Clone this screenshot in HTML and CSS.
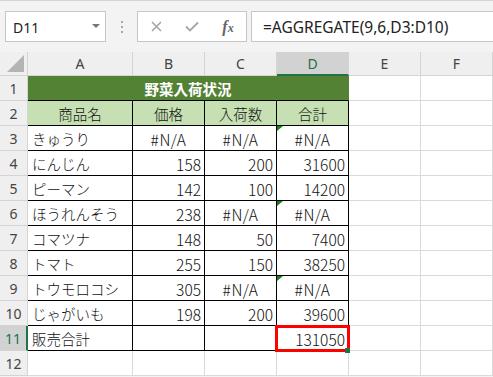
FILE: index.html
```html
<!DOCTYPE html>
<html lang="ja">
<head>
    <meta charset="UTF-8">
    <meta name="viewport" content="width=device-width, initial-scale=1.0">
    <title>AGGREGATE</title>
    <link rel="stylesheet" href="styles.css">
</head>
<body>
    <div class="toolbar">
        <div class="namebox">
            <span>D11</span>
            <span class="arrow"></span>
        </div>
        <div class="grip"><i></i><i></i><i></i></div>
        <div class="fxbox">
            <span class="slot">
                <svg width="11" height="11" viewBox="0 0 11 11"><path d="M1 1L10 10M10 1L1 10" stroke="#a6a6a6" stroke-width="1.6" fill="none"/></svg>
            </span>
            <span class="slot">
                <svg width="14" height="11" viewBox="0 0 14 11"><path d="M1 5.5L5 9.5L13 1.5" stroke="#a6a6a6" stroke-width="1.8" fill="none"/></svg>
            </span>
            <span class="slot fx"><span class="f">f</span><span class="x">x</span></span>
        </div>
        <div class="formula">=AGGREGATE(9,6,D3:D10)</div>
    </div>

    <div class="sheet">
        <!-- column headers -->
        <div class="c corner"><span class="tri"></span></div>
        <div class="c h">A</div>
        <div class="c h">B</div>
        <div class="c h">C</div>
        <div class="c h sel">D</div>
        <div class="c h">E</div>
        <div class="c h">F</div>

        <div class="c r">1</div>
        <div class="c t title">野菜入荷状況</div>
        <div class="c"></div><div class="c"></div>

        <div class="c r">2</div>
        <div class="c t hd">商品名</div>
        <div class="c t hd">価格</div>
        <div class="c t hd">入荷数</div>
        <div class="c t hd">合計</div>
        <div class="c"></div><div class="c"></div>

        <div class="c r">3</div>
        <div class="c t">きゅうり</div>
        <div class="c t e">#N/A</div>
        <div class="c t e">#N/A</div>
        <div class="c t e err">#N/A</div>
        <div class="c"></div><div class="c"></div>

        <div class="c r">4</div>
        <div class="c t">にんじん</div>
        <div class="c t n">158</div>
        <div class="c t n">200</div>
        <div class="c t n">31600</div>
        <div class="c"></div><div class="c"></div>

        <div class="c r">5</div>
        <div class="c t">ピーマン</div>
        <div class="c t n">142</div>
        <div class="c t n">100</div>
        <div class="c t n">14200</div>
        <div class="c"></div><div class="c"></div>

        <div class="c r">6</div>
        <div class="c t">ほうれんそう</div>
        <div class="c t n">238</div>
        <div class="c t e">#N/A</div>
        <div class="c t e err">#N/A</div>
        <div class="c"></div><div class="c"></div>

        <div class="c r">7</div>
        <div class="c t">コマツナ</div>
        <div class="c t n">148</div>
        <div class="c t n">50</div>
        <div class="c t n">7400</div>
        <div class="c"></div><div class="c"></div>

        <div class="c r">8</div>
        <div class="c t">トマト</div>
        <div class="c t n">255</div>
        <div class="c t n">150</div>
        <div class="c t n">38250</div>
        <div class="c"></div><div class="c"></div>

        <div class="c r">9</div>
        <div class="c t">トウモロコシ</div>
        <div class="c t n">305</div>
        <div class="c t e">#N/A</div>
        <div class="c t e err">#N/A</div>
        <div class="c"></div><div class="c"></div>

        <div class="c r">10</div>
        <div class="c t">じゃがいも</div>
        <div class="c t n">198</div>
        <div class="c t n">200</div>
        <div class="c t n">39600</div>
        <div class="c"></div><div class="c"></div>

        <div class="c r sel">11</div>
        <div class="c t">販売合計</div>
        <div class="c t"></div>
        <div class="c t"></div>
        <div class="c t n active">131050<span class="mark"></span><span class="handle"></span></div>
        <div class="c"></div><div class="c"></div>

        <div class="c r">12</div>
        <div class="c"></div><div class="c"></div><div class="c"></div>
        <div class="c"></div><div class="c"></div><div class="c"></div>
    </div>
</body>
</html>
```

FILE: styles.css
```css
* {
    box-sizing: border-box;
}

body {
    margin: 0;
    width: 493px;
    height: 377px;
    overflow: hidden;
    background: #f3f3f3;
    font-family: "Noto Sans", sans-serif;
}

/* formula bar */
.toolbar {
    height: 52px;
    border-top: 1px solid #d4d4d4;
    padding: 10px 0 0 5px;
    display: flex;
    align-items: flex-start;
}

.namebox {
    width: 101px;
    height: 31px;
    background: #fff;
    border: 1px solid #c6c6c6;
    display: flex;
    align-items: center;
    justify-content: space-between;
    padding: 2px 5px 0 7px;
    font-size: 14px;
    color: #222;
}

.arrow {
    width: 0;
    height: 0;
    border-left: 4px solid transparent;
    border-right: 4px solid transparent;
    border-top: 4px solid #777;
    margin-bottom: 3px;
}

.grip {
    width: 31px;
    height: 31px;
    display: flex;
    flex-direction: column;
    align-items: center;
    justify-content: center;
    gap: 3px;
}

.grip i {
    width: 2px;
    height: 2px;
    background: #a6a6a6;
}

.fxbox {
    width: 110px;
    height: 31px;
    background: #fff;
    border: 1px solid #c6c6c6;
    display: flex;
}

.slot {
    width: 36px;
    display: flex;
    align-items: center;
    justify-content: center;
}

.fx {
    font-family: "Liberation Serif", serif;
    font-style: italic;
    font-weight: bold;
    color: #666;
    padding-top: 1px;
}

.fx .f {
    font-size: 16px;
}

.fx .x {
    font-size: 12px;
    margin-top: 3px;
}

.formula {
    flex: 1;
    margin-left: 4px;
    margin-right: -2px;
    height: 31px;
    background: #fff;
    border: 1px solid #c6c6c6;
    padding: 1px 0 0 11px;
    display: flex;
    align-items: center;
    font-size: 15.5px;
    color: #222;
}

/* sheet */
.sheet {
    display: grid;
    grid-template-columns: 28px 105px 72px 72px 72px 72px 72px;
    grid-template-rows: 24px repeat(12, 25px);
    background: #fff;
}

.c {
    position: relative;
    display: flex;
    align-items: center;
    padding: 1px 4px 0;
    border-right: 1px solid #dadada;
    border-bottom: 1px solid #dadada;
    font-family: "Noto Sans CJK JP", sans-serif;
    font-size: 14.5px;
    font-weight: 300;
    color: #111;
    white-space: nowrap;
}

.corner {
    background: #efefef;
    border-color: #d4d4d4;
    align-items: flex-end;
    justify-content: flex-end;
    padding: 0 3px 3px 0;
}

.tri {
    width: 0;
    height: 0;
    border-left: 17px solid transparent;
    border-bottom: 17px solid #b4b4b4;
}

.h,
.r {
    background: #efefef;
    border-color: #d4d4d4;
    justify-content: center;
    font-family: "Noto Sans", sans-serif;
    font-size: 14px;
    font-weight: normal;
    color: #444;
    padding: 0;
}

.h.sel {
    background: #d2d2d2;
    color: #217346;
    border-bottom: 2px solid #217346;
}

.r.sel {
    background: #d2d2d2;
    color: #217346;
    border-right: 2px solid #217346;
}

.t {
    border-right-color: #000;
    border-bottom-color: #000;
}

.title {
    grid-column: span 4;
    background: #548235;
    border-right-color: #548235;
    color: #fff;
    font-weight: bold;
    justify-content: center;
}

.hd {
    background: #c6e0b4;
    justify-content: center;
}

.n {
    justify-content: flex-end;
    padding-right: 3px;
    font-size: 15.5px;
}

.e {
    justify-content: center;
    font-size: 15.5px;
    letter-spacing: 0.5px;
}

.err::before {
    content: "";
    position: absolute;
    top: 0;
    left: 0;
    border-top: 5px solid #1a7f1a;
    border-right: 6px solid transparent;
}

.mark {
    position: absolute;
    top: -1px;
    left: -2px;
    right: -2px;
    bottom: -2px;
    border: 3px solid #ff0000;
    z-index: 2;
}

.handle {
    position: absolute;
    right: -2px;
    bottom: -3px;
    width: 5px;
    height: 5px;
    background: #217346;
    z-index: 3;
}
```
